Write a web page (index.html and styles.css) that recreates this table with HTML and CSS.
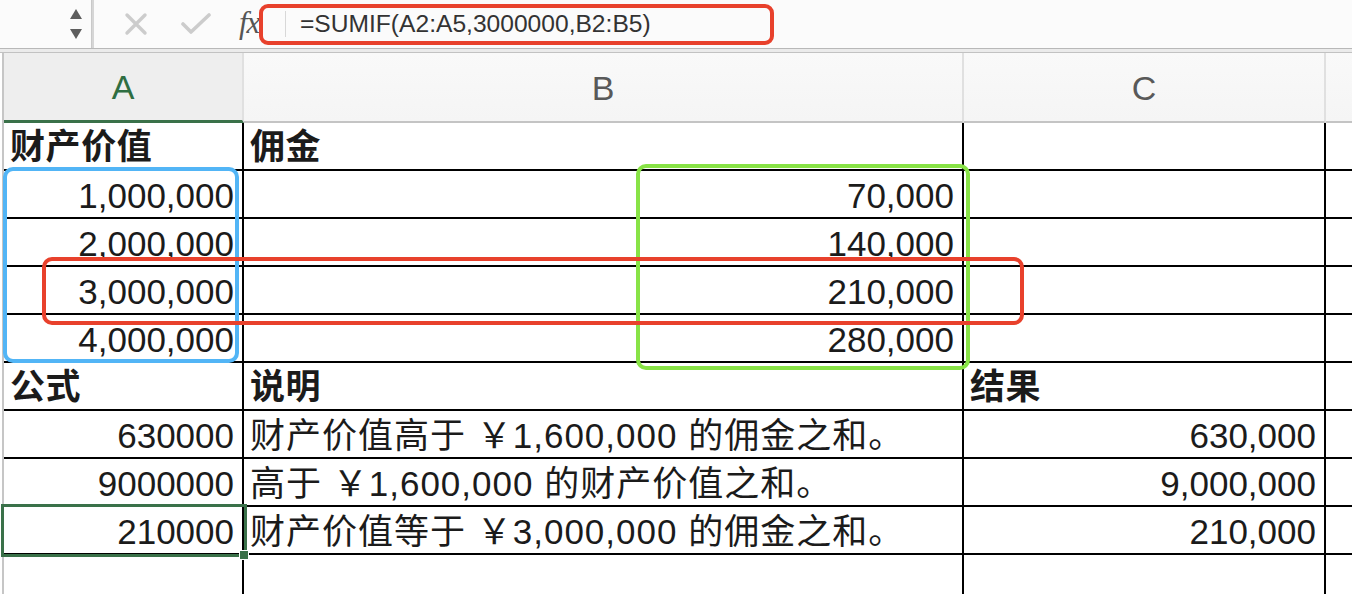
FILE: index.html
```html
<!DOCTYPE html>
<html lang="zh-CN">
<head>
<meta charset="utf-8">
<title>SUMIF</title>
<link rel="stylesheet" href="styles.css">
</head>
<body>
<div class="app">
  <div class="toolbar">
    <div class="namebox">
      <svg class="spinner" width="14" height="32" viewBox="0 0 14 32">
        <path d="M7 1 L13 11 L1 11 Z" fill="#5e5e5e"/>
        <path d="M1 21 L13 21 L7 31 Z" fill="#5e5e5e"/>
      </svg>
    </div>
    <div class="tb-sep"></div>
    <div class="tb-actions">
      <svg width="24" height="24" viewBox="0 0 24 24"><path d="M3 3 L21 21 M21 3 L3 21" stroke="#cccccc" stroke-width="3.4" stroke-linecap="round" fill="none"/></svg>
      <svg width="30" height="22" viewBox="0 0 30 22"><path d="M2 11 L10 19 L28 2" stroke="#cccccc" stroke-width="3.6" stroke-linecap="round" stroke-linejoin="round" fill="none"/></svg>
    </div>
    <div class="fx">fx</div>
    <div class="formula-sep"></div>
    <div class="formula">=SUMIF(A2:A5,3000000,B2:B5)</div>
  </div>
  <div class="toolbar-rule"></div>

  <div class="colheads">
    <div class="ch ch-sel">A</div>
    <div class="ch">B</div>
    <div class="ch">C</div>
    <div class="ch ch-last"></div>
  </div>

  <div class="sheet">
    <div class="cell hd">财产价值</div><div class="cell hd">佣金</div><div class="cell"></div><div class="cell last"></div>
    <div class="cell num">1,000,000</div><div class="cell num">70,000</div><div class="cell"></div><div class="cell last"></div>
    <div class="cell num">2,000,000</div><div class="cell num">140,000</div><div class="cell"></div><div class="cell last"></div>
    <div class="cell num">3,000,000</div><div class="cell num">210,000</div><div class="cell"></div><div class="cell last"></div>
    <div class="cell num">4,000,000</div><div class="cell num">280,000</div><div class="cell"></div><div class="cell last"></div>
    <div class="cell hd">公式</div><div class="cell hd">说明</div><div class="cell hd">结果</div><div class="cell last"></div>
    <div class="cell num">630000</div><div class="cell txt">财产价值高于 ￥1,600,000 的佣金之和。</div><div class="cell num">630,000</div><div class="cell last"></div>
    <div class="cell num">9000000</div><div class="cell txt">高于 ￥1,600,000 的财产价值之和。</div><div class="cell num">9,000,000</div><div class="cell last"></div>
    <div class="cell num">210000</div><div class="cell txt">财产价值等于 ￥3,000,000 的佣金之和。</div><div class="cell num">210,000</div><div class="cell last"></div>
    <div class="cell empty"></div><div class="cell empty"></div><div class="cell empty"></div><div class="cell empty last"></div>
  </div>

  <div class="selection"></div>
  <div class="fill-handle"></div>

  <div class="mark mark-formula"></div>
  <div class="mark mark-blue"></div>
  <div class="mark mark-green"></div>
  <div class="mark mark-red"></div>
</div>
</body>
</html>
```

FILE: styles.css
```css
* { box-sizing: border-box; }
html, body { margin: 0; padding: 0; }
body {
  width: 1352px;
  height: 594px;
  overflow: hidden;
  background: #ffffff;
  font-family: "Liberation Sans", "Noto Sans CJK SC", sans-serif;
  color: #1b1b1b;
}
.app {
  position: relative;
  width: 1352px;
  height: 594px;
  overflow: hidden;
}

/* toolbar */
.toolbar {
  height: 48px;
  display: flex;
  align-items: center;
  background: #fbfbfb;
}
.namebox {
  width: 91px;
  height: 48px;
  display: flex;
  align-items: center;
  justify-content: flex-end;
  padding-right: 8px;
}
.spinner { display: block; }
.tb-sep {
  width: 3px;
  height: 48px;
  background: #d6d6d6;
  border-left: 1px solid #c9c9c9;
}
.tb-actions {
  display: flex;
  align-items: center;
  gap: 33px;
  padding-left: 30px;
  width: 144px;
}
.tb-actions svg { display: block; }
.fx {
  font-family: "Liberation Serif", serif;
  font-style: italic;
  font-size: 31px;
  color: #555555;
  letter-spacing: -1px;
  padding-left: 1px;
  width: 47px;
  margin-top: -2px;
}
.formula-sep {
  width: 1px;
  height: 26px;
  background: #d8d8d8;
}
.formula {
  padding-left: 14px;
  font-size: 24.6px;
  color: #333333;
  margin-top: -1px;
}
.toolbar-rule {
  height: 5px;
  border-top: 1px solid #b8b8b8;
  border-bottom: 1px solid #c2c2c2;
  background: #ebebeb;
}

/* column headers */
.colheads {
  display: grid;
  grid-template-columns: 240px 720px 362px 1fr;
  height: 70px;
  margin-left: 2px;
  border-left: 2px solid #c6c6c6;
}
.ch {
  display: flex;
  align-items: center;
  justify-content: center;
  font-size: 34px;
  color: #595959;
  background: linear-gradient(#f9f9f9, #f5f5f5);
  border-right: 2px solid #e0e0e0;
  border-bottom: 2px solid #c4c4c4;
  padding-top: 2px;
}
.ch-sel {
  background: #eeeeee;
  color: #2f6e42;
  border-bottom: 3px solid #3a7149;
}
.ch-last { border-right: none; }

/* sheet */
.sheet {
  display: grid;
  grid-template-columns: 240px 720px 362px 1fr;
  grid-auto-rows: 48px;
  margin-left: 2px;
  border-left: 2px solid #c6c6c6;
}
.cell {
  border-right: 2px solid #000;
  border-bottom: 2px solid #000;
  display: flex;
  align-items: center;
  font-size: 35px;
  line-height: 1;
  padding: 3px 8px 0 6px;
  white-space: nowrap;
  overflow: visible;
}
.cell.last { border-right: none; }
.hd { font-weight: bold; padding-top: 0; letter-spacing: 0.6px; }
.num { justify-content: flex-end; }
.txt { padding-left: 6px; padding-top: 2px; letter-spacing: 1px; }
.cell.empty { border-bottom: none; height: 48px; }

/* selection */
.selection {
  position: absolute;
  left: 1px;
  top: 504px;
  width: 246px;
  height: 53px;
  border: 3px solid #3a7149;
}
.fill-handle {
  position: absolute;
  left: 239px;
  top: 550px;
  width: 10px;
  height: 10px;
  background: #3a7149;
  border: 1px solid #ffffff;
}

/* annotation marks */
.mark {
  position: absolute;
  border-style: solid;
  border-width: 4px;
  border-radius: 10px;
}
.mark-formula {
  left: 259px;
  top: 4px;
  width: 515px;
  height: 41px;
  border-color: #e8412c;
  border-radius: 9px;
}
.mark-blue {
  left: 3px;
  top: 167px;
  width: 236px;
  height: 196px;
  border-color: #52b5f6;
}
.mark-green {
  left: 636px;
  top: 164px;
  width: 334px;
  height: 206px;
  border-color: #88e346;
}
.mark-red {
  left: 42px;
  top: 257px;
  width: 982px;
  height: 68px;
  border-color: #e8412c;
}
```
